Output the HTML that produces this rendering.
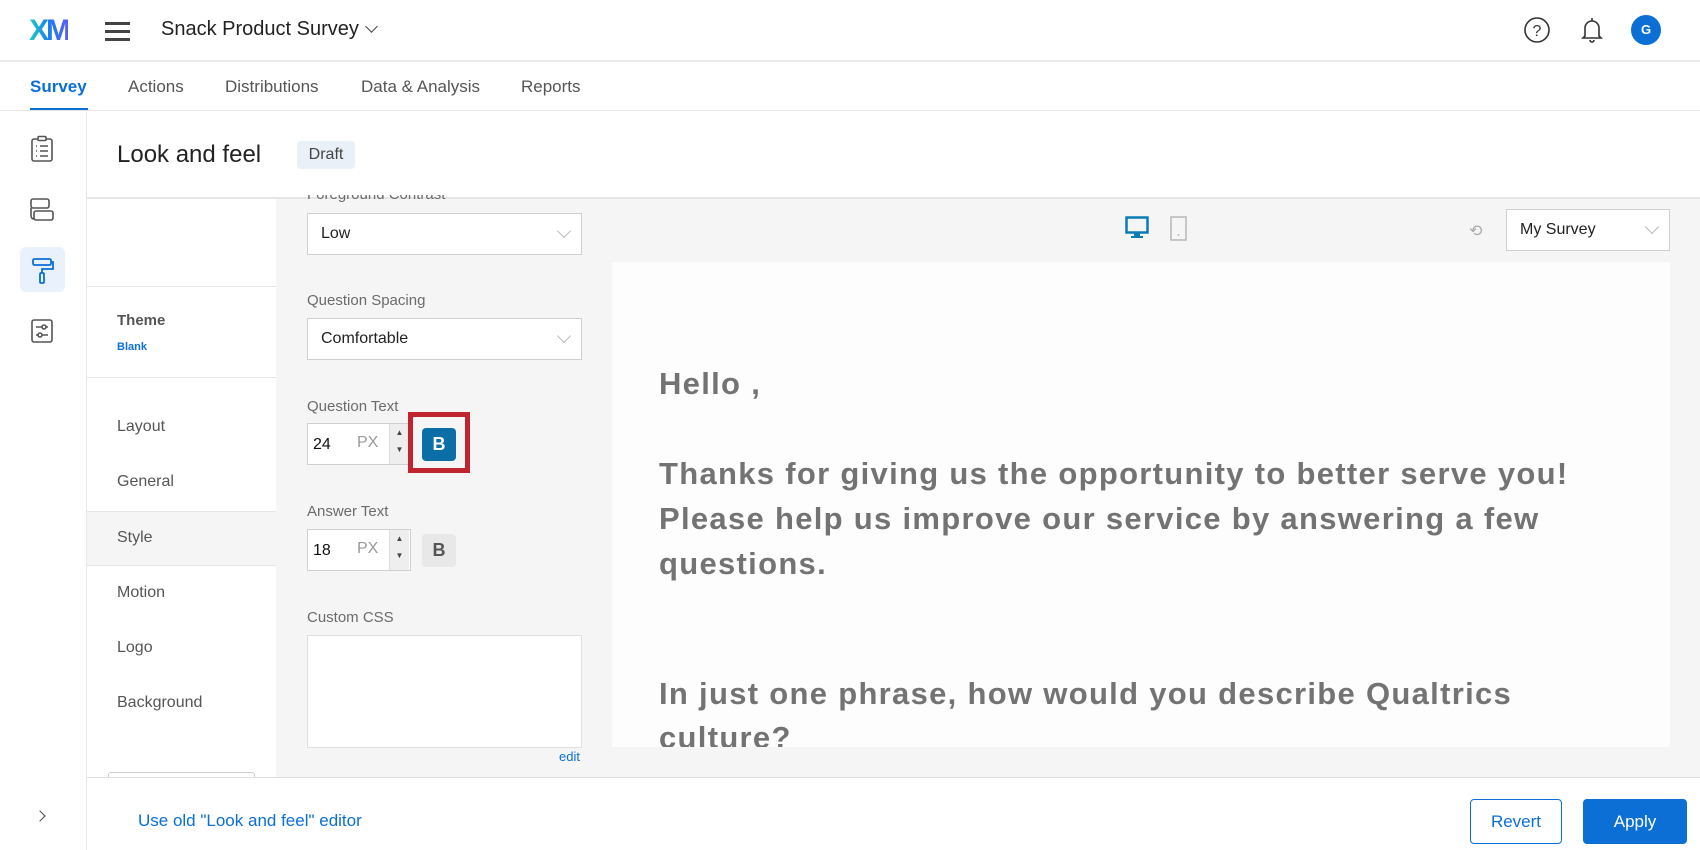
<!DOCTYPE html>
<html><head><meta charset="utf-8"><style>
*{box-sizing:border-box;margin:0;padding:0}
body{width:1700px;height:850px;overflow:hidden;background:#fff;font-family:"Liberation Sans",sans-serif;color:#333;position:relative}
.a{position:absolute}
.lbl{position:absolute;left:307px;font-size:15px;color:#6b6b6b}
.sel{position:absolute;left:307px;width:275px;height:42px;background:#fff;border:1px solid #d0d0d0;font-size:16px;color:#222;padding:11px 13px}
.chev{position:absolute;right:12px;top:12px;width:10px;height:10px;border-right:1.5px solid #bbb;border-bottom:1.5px solid #bbb;transform:rotate(45deg)}
.nav{position:absolute;left:117px;font-size:16px;color:#555}
.pv{position:absolute;left:659px;font-size:31px;font-weight:bold;color:#737373;white-space:nowrap;letter-spacing:1.3px}
</style></head><body>
<!-- top bar -->
<div class="a" style="left:29px;top:14px;font-size:30px;font-weight:bold;letter-spacing:-3px;color:#10a0e0;background:linear-gradient(90deg,#1dd0c0,#1a7ff0 50%,#5b5ef0);-webkit-background-clip:text;color:transparent">XM</div>
<div class="a" style="left:105px;top:22px;width:25px;height:2.5px;background:#444;box-shadow:0 8px 0 #444,0 16px 0 #444"></div>
<div class="a" style="left:161px;top:18px;font-size:20px;color:#222">Snack Product Survey</div>
<div class="a" style="left:367px;top:22px;width:9px;height:9px;border-right:1.5px solid #444;border-bottom:1.5px solid #444;transform:rotate(45deg)"></div>
<svg class="a" style="left:1523px;top:16px" width="28" height="28"><circle cx="14" cy="14" r="12" fill="none" stroke="#333" stroke-width="1.6"/><text x="14" y="20" font-size="16" text-anchor="middle" fill="#333" font-family="Liberation Sans">?</text></svg>
<svg class="a" style="left:1580px;top:15px" width="24" height="30"><path d="M5 21V13a7 7 0 0 1 14 0v8l2 2H3z" fill="none" stroke="#333" stroke-width="1.6"/><path d="M10 25a2 2 0 0 0 4 0" fill="none" stroke="#333" stroke-width="1.6"/><line x1="12" y1="3" x2="12" y2="6" stroke="#333" stroke-width="1.6"/></svg>
<div class="a" style="left:1631px;top:15px;width:30px;height:30px;border-radius:50%;background:#0b6fd6;color:#fff;font-size:13px;font-weight:bold;text-align:center;line-height:30px">G</div>
<div class="a" style="left:0;top:60px;width:1700px;height:2px;background:#ebebeb"></div>
<!-- tabs -->
<div class="a" style="left:30px;top:77px;font-size:17px;font-weight:bold;color:#0b6fd6">Survey</div>
<div class="a" style="left:30px;top:108px;width:58px;height:3px;background:#0b6fd6"></div>
<div class="a" style="left:128px;top:77px;font-size:17px;color:#555">Actions</div>
<div class="a" style="left:225px;top:77px;font-size:17px;color:#555">Distributions</div>
<div class="a" style="left:361px;top:77px;font-size:17px;color:#555">Data &amp; Analysis</div>
<div class="a" style="left:521px;top:77px;font-size:17px;color:#555">Reports</div>
<div class="a" style="left:0;top:110px;width:1700px;height:1px;background:#e6e6e6"></div>
<!-- rail -->
<div class="a" style="left:86px;top:111px;width:1px;height:739px;background:#e8e8e8"></div>
<svg class="a" style="left:30px;top:135px" width="24" height="28" fill="none" stroke="#555" stroke-width="1.6"><rect x="2" y="4" width="20" height="22" rx="2"/><rect x="8" y="1.5" width="8" height="4" rx="1" fill="#fff"/><path d="M6 11h1M10 11h8M6 16h1M10 16h8M6 21h1M10 21h8"/></svg>
<svg class="a" style="left:29px;top:197px" width="26" height="26" fill="none" stroke="#555" stroke-width="1.6"><rect x="2" y="2" width="18" height="9" rx="2"/><rect x="5" y="14" width="19" height="9" rx="2"/><path d="M2 11v7q0 4 3 4"/></svg>
<div class="a" style="left:20px;top:247px;width:45px;height:45px;background:#e8f1fc;border-radius:6px"></div>
<svg class="a" style="left:30px;top:257px" width="26" height="28" fill="none" stroke="#0b6fd6" stroke-width="1.8"><rect x="3" y="2" width="18" height="6" rx="1.5"/><path d="M21 5h2v7h-11v4"/><rect x="10" y="16" width="4" height="10" rx="1"/></svg>
<svg class="a" style="left:30px;top:318px" width="24" height="26" fill="none" stroke="#555" stroke-width="1.6"><rect x="2" y="2" width="20" height="22" rx="2"/><path d="M6 9h12M6 17h12"/><circle cx="14" cy="9" r="2" fill="#fff"/><circle cx="10" cy="17" r="2" fill="#fff"/></svg>
<div class="a" style="left:36px;top:812px;width:8px;height:8px;border-right:1.5px solid #444;border-top:1.5px solid #444;transform:rotate(45deg)"></div>
<!-- header -->
<div class="a" style="left:117px;top:141px;font-size:24px;color:#222">Look and feel</div>
<div class="a" style="left:297px;top:141px;width:58px;height:28px;background:#eaf0f8;border-radius:4px;font-size:16px;color:#444;text-align:center;line-height:28px">Draft</div>
<div class="a" style="left:87px;top:197px;width:1613px;height:2px;background:#e6e6e6"></div>
<!-- subnav -->
<div class="a" style="left:87px;top:199px;width:189px;height:578px;background:#fff"></div>
<div class="a" style="left:87px;top:286px;width:189px;height:1px;background:#e6e6e6"></div>
<div class="a" style="left:87px;top:377px;width:189px;height:1px;background:#e6e6e6"></div>
<div class="a" style="left:117px;top:312px;font-size:15px;font-weight:bold;color:#555">Theme</div>
<div class="a" style="left:117px;top:341px;font-size:11px;font-weight:bold;color:#0b6fd6">Blank</div>
<div class="nav" style="top:418px">Layout</div>
<div class="nav" style="top:473px">General</div>
<div class="a" style="left:87px;top:511px;width:189px;height:55px;background:#f5f5f5;border-top:1px solid #e6e6e6;border-bottom:1px solid #e6e6e6"></div>
<div class="nav" style="top:529px">Style</div>
<div class="nav" style="top:584px">Motion</div>
<div class="nav" style="top:639px">Logo</div>
<div class="nav" style="top:694px">Background</div>
<div class="a" style="left:108px;top:772px;width:147px;height:10px;border:1px solid #ccc;border-bottom:none;border-radius:3px 3px 0 0;background:#fff"></div>
<!-- middle panel -->
<div class="a" style="left:276px;top:199px;width:1424px;height:578px;background:#f5f5f5"></div>
<div class="lbl" style="top:186px;clip-path:inset(9px 0 0 0)">Foreground Contrast</div>
<div class="sel" style="top:213px">Low<div class="chev"></div></div>
<div class="lbl" style="top:292px">Question Spacing</div>
<div class="sel" style="top:318px">Comfortable<div class="chev"></div></div>
<div class="lbl" style="top:398px">Question Text</div>
<div class="a" style="left:307px;top:423px;width:104px;height:42px;background:#fff;border:1px solid #d0d0d0"></div>
<div class="a" style="left:313px;top:436px;font-size:16px;color:#111">24</div>
<div class="a" style="left:357px;top:434px;font-size:16px;color:#999">PX</div>
<div class="a" style="left:389px;top:424px;width:20px;height:40px;background:#eee;border-left:1px solid #ddd;font-size:8px;color:#444;text-align:center;line-height:17px">▲<br>▼</div>
<div class="a" style="left:408px;top:412px;width:62px;height:61px;border:5px solid #c0242f"></div>
<div class="a" style="left:422px;top:428px;width:34px;height:33px;background:#0b6ea6;border-radius:4px;color:#fff;font-size:18px;font-weight:bold;text-align:center;line-height:33px">B</div>
<div class="lbl" style="top:503px">Answer Text</div>
<div class="a" style="left:307px;top:529px;width:104px;height:42px;background:#fff;border:1px solid #d0d0d0"></div>
<div class="a" style="left:313px;top:542px;font-size:16px;color:#111">18</div>
<div class="a" style="left:357px;top:540px;font-size:16px;color:#999">PX</div>
<div class="a" style="left:389px;top:530px;width:20px;height:40px;background:#eee;border-left:1px solid #ddd;font-size:8px;color:#444;text-align:center;line-height:17px">▲<br>▼</div>
<div class="a" style="left:422px;top:534px;width:34px;height:33px;background:#e8e8e8;border-radius:4px;color:#555;font-size:18px;font-weight:bold;text-align:center;line-height:33px">B</div>
<div class="lbl" style="top:609px">Custom CSS</div>
<div class="a" style="left:307px;top:635px;width:275px;height:113px;background:#fff;border:1px solid #e0e0e0"></div>
<div class="a" style="left:559px;top:749px;font-size:13px;color:#0b6fd6">edit</div>
<!-- preview -->
<svg class="a" style="left:1125px;top:216px" width="24" height="24"><rect x="1.5" y="1.5" width="21" height="15" fill="none" stroke="#0b7bb5" stroke-width="2.5"/><rect x="9" y="17" width="6" height="3" fill="#0b7bb5"/><rect x="6" y="20" width="12" height="2" fill="#0b7bb5"/></svg>
<svg class="a" style="left:1170px;top:216px" width="18" height="26"><rect x="1" y="1" width="15" height="23" fill="none" stroke="#bbb" stroke-width="1.6"/><circle cx="8.5" cy="19" r="0.9" fill="#aaa"/></svg>
<div class="a" style="left:1469px;top:221px;font-size:16px;color:#aaa">⟲</div>
<div class="a" style="left:1506px;top:209px;width:164px;height:42px;background:#fff;border:1px solid #d0d0d0;font-size:16px;color:#222;padding:11px 13px">My Survey<div class="chev"></div></div>
<div class="a" style="left:612px;top:262px;width:1058px;height:485px;background:#fdfdfd;overflow:hidden">
<div class="pv" style="left:47px;top:104px">Hello ,</div>
<div class="pv" style="left:47px;top:194px">Thanks for giving us the opportunity to better serve you!</div>
<div class="pv" style="left:47px;top:239px">Please help us improve our service by answering a few</div>
<div class="pv" style="left:47px;top:284px">questions.</div>
<div class="pv" style="left:47px;top:414px">In just one phrase, how would you describe Qualtrics</div>
<div class="pv" style="left:47px;top:458px">culture?</div>
</div>
<!-- footer -->
<div class="a" style="left:87px;top:777px;width:1613px;height:1px;background:#e0e0e0"></div>
<div class="a" style="left:87px;top:778px;width:1613px;height:72px;background:#fff"></div>
<div class="a" style="left:138px;top:811px;font-size:17px;color:#0b6fd6">Use old "Look and feel" editor</div>
<div class="a" style="left:1470px;top:799px;width:92px;height:45px;border:1px solid #0b6fd6;border-radius:4px;color:#0b6fd6;font-size:17px;text-align:center;line-height:43px">Revert</div>
<div class="a" style="left:1583px;top:799px;width:104px;height:45px;background:#0b6fd6;border-radius:4px;color:#fff;font-size:17px;text-align:center;line-height:45px">Apply</div>
</body></html>
